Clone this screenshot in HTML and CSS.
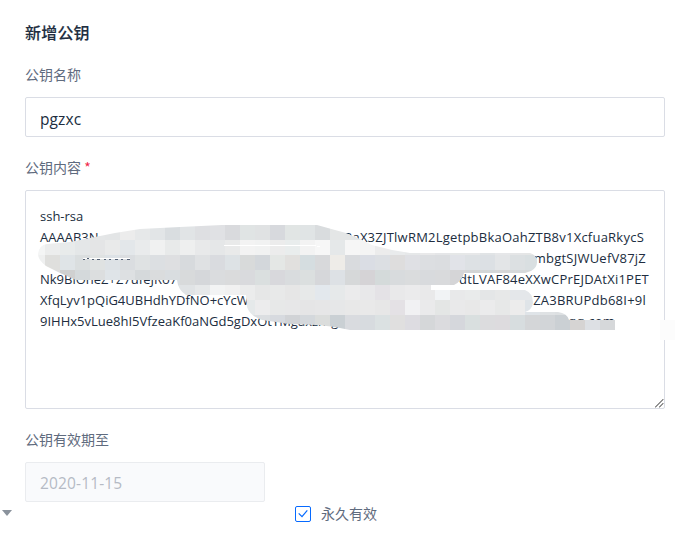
FILE: index.html
```html
<!DOCTYPE html>
<html lang="zh-CN">
<head>
<meta charset="utf-8">
<title>新增公钥</title>
<link rel="stylesheet" href="styles.css">
</head>
<body>
<main class="form">
  <h1 class="title">新增公钥</h1>
  <label class="label label-name">公钥名称</label>
  <div class="input"><span class="name-text">pgzxc</span></div>
  <label class="label label-key">公钥内容 <span class="required">*</span></label>
  <div class="textarea">
    <div class="line w-1"><span>ssh-rsa</span></div>
    <div class="line w-2"><span>AAAAB3N</span><span class="tail">BaX3ZJTlwRM2LgetpbBkaOahZTB8v1XcfuaRkycS</span></div>
    <div class="line w-3"><span></span><span class="tail">mbgtSJWUefV87jZ</span></div>
    <div class="line w-4"><span>Nk9BlOheZ+Z7ufeJRo7</span><span class="tail">dtLVAF84eXXwCPrEJDAtXi1PET</span></div>
    <div class="line w-3"><span>XfqLyv1pQiG4UBHdhYDfNO+cYcW</span><span class="tail">ZA3BRUPdb68I+9l</span></div>
    <div class="line w-6"><span>9IHHx5vLue8hI5VfzeaKf0aNGd5gDxOtYMgaxznrg</span><span class="tail">qq.com</span></div>
    <svg class="mosaic" width="687" height="120" viewBox="0 220 687 120">
      <defs>
        <clipPath id="brush">
          <path d="M38 254Q39 245 47 244L70 242L85 239L115 233L140 229L180 227L222 225H317L335 230L346 233L360 239L372 245L392 250L410 253H530Q537 255 537 262Q537 268 531 271L525 273H464Q462 281 454 285H431V290H525Q533 293 533 303Q532 310 525 312H558Q567 313 569 320H615V330H350L335 327L318 325L290 324L262 320Q250 316 247 307L246 295H186Q178 290 177 280H76L60 273L46 266Q38 260 38 254Z"/>
        </clipPath>
      </defs>
      <g id="cells" clip-path="url(#brush)" shape-rendering="crispEdges"></g>
      <path d="M224 245.5H316M317 246.5H320M83 258.5H130" stroke="#fff"/>
      <path d="M83 259.5h2M87 258.5h2M92 259.5h2M97 259.5h3M104 259.5h2M109 259.5h2M115 259.5h3M121 259.5h2M127 259.5h3" stroke="#536074"/>
      <path d="M660 320h15v20h-15z" fill="#fcfcfc"/>
    </svg>
    <svg class="grip" width="9" height="9" viewBox="0 0 9 9"><path d="M0 8h1v-1h1v-1h1v-1h1v-1h1v-1h1v-1h1v-1h1v-1M4 8h1v-1h1v-1h1v-1h1v-1" fill="none" stroke="#555" stroke-width=".8"/></svg>
  </div>
  <label class="label label-date">公钥有效期至</label>
  <div class="bottom">
    <div class="input date"><span class="date-text">2020-11-15</span></div>
    <div class="forever">
      <svg width="16" height="16" viewBox="0 0 16 16" fill="none" stroke="#066aff"><rect x=".5" y=".5" width="15" height="15" rx="1.5"/><path d="M3.7 7.3L7 10.7L12.3 4.3" stroke-width="1.2"/></svg>
      <span class="forever-text">永久有效</span>
    </div>
  </div>
</main>
<svg class="caret" width="10" height="6" viewBox="0 0 10 6"><path d="M0 0H10L5 6Z" fill="#8a929c"/></svg>
<script src="script.js"></script>
</body>
</html>
```
FILE: styles.css
```css
* { box-sizing: border-box; }
body {
  margin: 0;
  width: 687px;
  height: 537px;
  overflow: hidden;
  background: #fff;
  color: #202d40;
  font-family: "Open Sans", "Noto Sans CJK SC", sans-serif;
}
.form { width: 640px; margin-left: 25px; padding-top: 20px; }
.title { margin: 0; height: 24px; font: 500 16px/24px "Noto Sans CJK SC", sans-serif; letter-spacing: .2px; -webkit-text-stroke: .15px #202d40; }
.label { display: block; height: 20px; color: #5f6b7e; font: 14px/20px "Noto Sans CJK SC", sans-serif; }
.label-name { margin-top: 20px; }
.label-key { margin-top: 20px; }
.label-date { margin-top: 20px; }
.required { color: #f0284a; }
.input {
  display: flex;
  align-items: center;
  height: 40px;
  margin-top: 13px;
  padding: 3px 14px 0;
  border: 1px solid #dadde5;
  border-radius: 2px;
  font-size: 15.5px;
}
.name-text { letter-spacing: .1px; }
.textarea {
  position: relative;
  height: 219px;
  margin-top: 13px;
  padding: 15px 14px;
  border: 1px solid #dadde5;
  border-radius: 2px;
  font-size: 13px;
  line-height: 21px;
}
.line { display: flex; justify-content: space-between; height: 21px; white-space: pre; }
.tail { letter-spacing: .23px; }
.w-1 { width: 44px; }
.w-2 { width: 604px; }
.w-3 { width: 606px; }
.w-4 { width: 609px; }
.w-6 { width: 575px; }
.mosaic { position: absolute; left: -26px; top: 29px; }
.grip { position: absolute; right: 0; bottom: 0; }
.bottom { display: flex; gap: 30px; }
.date { width: 240px; padding-top: 2px; background: #f9fafc; border-color: #eaecef; color: #b5bac5; letter-spacing: .15px; }
.forever { display: flex; align-items: center; gap: 10px; height: 20px; margin-top: 55px; color: #5f6b7e; font: 14px/20px "Noto Sans CJK SC", sans-serif; }
.forever-text { padding-bottom: 3px; }
.caret { position: absolute; left: 2px; top: 510px; }
```
FILE: script.js
```javascript
// Each row: first x, top y, then one colour per 15px cell.
const rows = [
  [60, 225, "e8eaeb e4e6e8 e4e6e7 e3e5e6 ececec e6e8e9 e2e5e7 d9dde0 e1e4e6 dedfe2 e0e1e4 d9dadd e0e4e4 e0e2e3 d7d9dd e1e5e4 e0e4e5 d9dcde e4e6e6 e4e6e6 e4e6e6"],
  [30, 240, "f4f5f5 eceded e8ebeb e4e7e8 e4e5e6 e9eaea e3e7ea e9ebec f0f1f1 e8eaea eeefef e8e9ea e5e7e8 e9eaea f3f3f3 f1f2f2 ececec e9eded f3f3f3 f7f7f7 e5e8e9 f6f6f6 f4f4f4 ececec e9ebec e6e8e9 e9e9ea e5e6e8 e6e8e8 e7e8e9 e1e4e6 e6e7e9 e5e6e7 e5e6e6"],
  [30, 255, "eff0f0 dfdfdd dfe4e7 dadedf dfe2e2 dde2e6 dadde0 dfe2e3 dcdfe2 dedfe1 d7dadd dfe1e3 d9dbdf dde2e5 d8dada d3d7db e4e7e5 e1e0de d5dde0 d8d9db eeece8 d9dbde dadde4 dcdfe3 dedddd dfe0e4 dcdee1 dbdde0 e1e3e8 dde1e4 dce0e4 e3e5e7 dce0e2 d9dfe1"],
  [30, 270, "dededd dededd cfd0d0 d4d9db dcdedf dfe4e8 dde0e2 d5d9db dadcdd d9dde0 d8dadb d5d7da dadcde dadbdc d9dadd dadfdf d8d8dc d9dcde dbdfdf d6d7da dde1e5 d6d8d9 d5d3d6 d4dada d8dbdd dadcdd d8dadd d9dadc d5d5d7 d3d5d6 d3d6d7 d5d6d7 d6d9db d5d8da"],
  [165, 285, "dfe3e5 e0e3e5 e6e8e9 f3f4f4 f1f1f1 ebecec e6e7e7 e8e9e9 e6e6e6 e7e9e9 e3e8ed e6e9ea ebebec e8e8ea e4e2e6 e9e9ea ebebec e9e9ea f1f3f5 e8e9ea e9ebeb e4e6e7 e7e8e8 e4e7ea e4e7ea"],
  [240, 300, "e5e9ea ececed e7e8e8 e7e7e8 e5e5e6 e6e6e7 e6e7e8 e8e8e8 e9e9e9 e7e7e7 e4e1e5 f1f1f3 eaeaeb e4e6e5 e9e9ea e8e8e8 ebebec e7e8e8 ececec dfe4e8 dfe2e4 dde0e2"],
  [240, 315, "dedede dbdee1 d7dadf d1d3d6 d4d8dc dbdddc cad0d4 d9dbdf d7dbdf dbe1e2 e0dfdf dddce1 d5d7d9 dbdbde d5d7dc d9dfdf dcdcde dddbde d7dddf d4d6d8 d2d5d8 cbd0d4 d6d4d3 dde0e4 d6d8da"]
];
const group = document.getElementById("cells");
for (const [x, y, colours] of rows) {
  colours.split(" ").forEach((c, i) => {
    const r = document.createElementNS("http://www.w3.org/2000/svg", "rect");
    r.setAttribute("x", x + i * 15);
    r.setAttribute("y", y);
    r.setAttribute("width", 15);
    r.setAttribute("height", 15);
    r.setAttribute("fill", "#" + c);
    group.appendChild(r);
  });
}
```
